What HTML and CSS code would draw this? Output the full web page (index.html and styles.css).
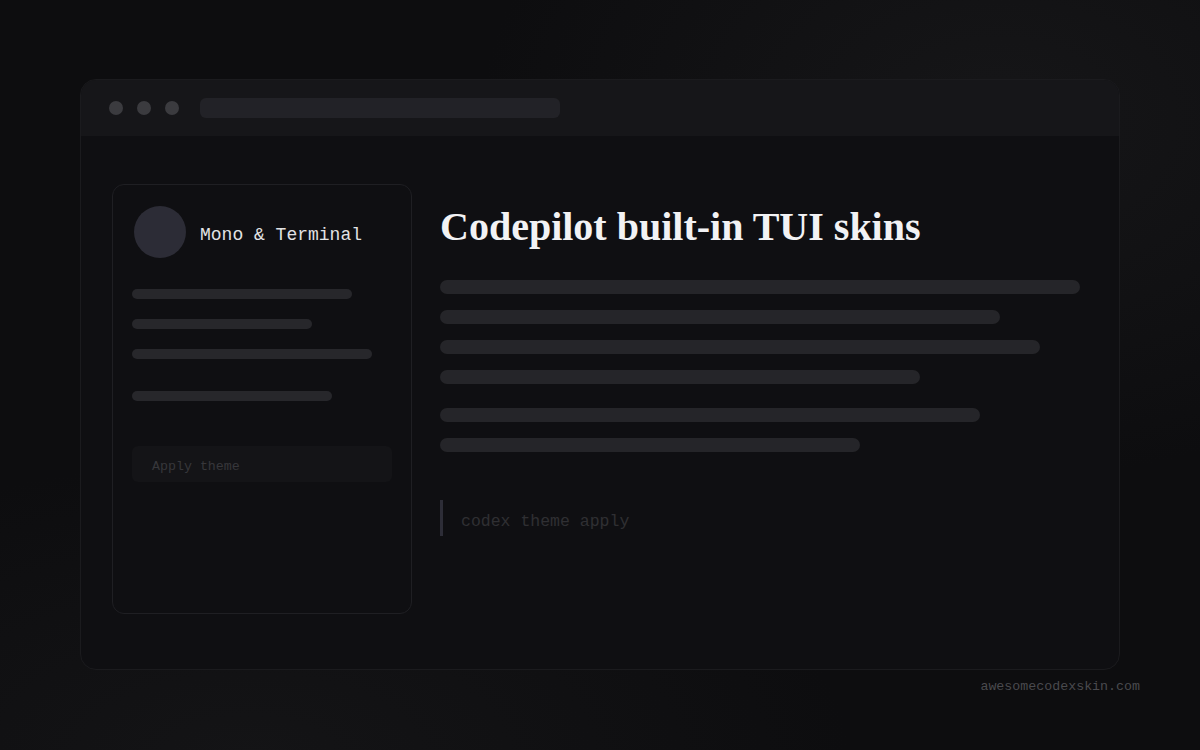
FILE: index.html
```html
<!DOCTYPE html>
<html lang="en">
<head>
<meta charset="utf-8">
<title>Codepilot built-in TUI skins</title>
<link rel="stylesheet" href="styles.css">
</head>
<body>
<div class="stage">
  <div class="window">
    <div class="titlebar">
      <span class="dot"></span><span class="dot"></span><span class="dot"></span>
      <span class="url"></span>
    </div>
    <div class="content">
      <aside class="card">
        <div class="card-head">
          <div class="avatar"></div>
          <div class="name">Mono &amp; Terminal</div>
        </div>
        <div class="card-lines">
          <div class="bar sm w220"></div>
          <div class="bar sm w180"></div>
          <div class="bar sm w240"></div>
          <div class="bar sm w200 gap-top"></div>
        </div>
        <div class="apply">Apply theme</div>
      </aside>
      <main class="main">
        <h1 class="title">Codepilot built-in TUI skins</h1>
        <div class="lines">
          <div class="bar lg w640"></div>
          <div class="bar lg w560"></div>
          <div class="bar lg w600"></div>
          <div class="bar lg w480"></div>
        </div>
        <div class="lines second">
          <div class="bar lg w540"></div>
          <div class="bar lg w420"></div>
        </div>
        <div class="cmd">codex theme apply</div>
      </main>
    </div>
  </div>
  <div class="footer">awesomecodexskin.com</div>
</div>
</body>
</html>
```
FILE: styles.css
```css
* { box-sizing: border-box; }
html, body { margin: 0; padding: 0; }
body {
  width: 1200px;
  height: 750px;
  overflow: hidden;
  background:
    radial-gradient(ellipse 520px 360px at 1000px 120px, #161618 0%, rgba(22,22,24,0) 100%),
    radial-gradient(ellipse 600px 300px at 250px 760px, #141416 0%, rgba(20,20,22,0) 100%),
    #0d0d0f;
  font-family: "Liberation Mono", "DejaVu Sans Mono", monospace;
}
.stage {
  padding: 79px 80px 0 80px;
}
.window {
  height: 591px;
  border-radius: 16px;
  background: #0f0f12;
  border: 1px solid #1b1b1e;
  overflow: hidden;
}
.titlebar {
  height: 56px;
  background: #161619;
  display: flex;
  align-items: center;
  padding-left: 28px;
  gap: 14px;
}
.dot {
  width: 14px;
  height: 14px;
  border-radius: 50%;
  background: #3b3b3f;
}
.url {
  width: 360px;
  height: 20px;
  border-radius: 6px;
  background: #222227;
  margin-left: 7px;
}
.content {
  display: flex;
  padding: 48px 39px 0 31px;
  gap: 28px;
}
.card {
  width: 300px;
  height: 430px;
  border: 1px solid #1f1f23;
  border-radius: 12px;
  padding: 21px 19px;
  flex-shrink: 0;
}
.card-head {
  display: flex;
  align-items: center;
  gap: 14px;
  padding-left: 2px;
}
.avatar {
  width: 52px;
  height: 52px;
  border-radius: 50%;
  background: #2c2c36;
}
.name {
  color: #e2e2e4;
  font-size: 18px;
  line-height: 24px;
  margin-top: 6px;
}
.card-lines {
  display: flex;
  flex-direction: column;
  gap: 20px;
  margin-top: 31px;
}
.bar {
  background: #27272b;
  border-radius: 6px;
}
.bar.sm { height: 10px; border-radius: 5px; }
.bar.lg { height: 14px; border-radius: 7px; background: #252529; }
.gap-top { margin-top: 12px; }
.w180 { width: 180px; }
.w200 { width: 200px; }
.w220 { width: 220px; }
.w240 { width: 240px; }
.w420 { width: 420px; }
.w480 { width: 480px; }
.w540 { width: 540px; }
.w560 { width: 560px; }
.w600 { width: 600px; }
.w640 { width: 640px; }
.apply {
  margin-top: 45px;
  height: 36px;
  width: 260px;
  border-radius: 6px;
  background: #141417;
  color: #37373b;
  font-size: 13.3px;
  line-height: 36px;
  padding-left: 20px;
  padding-top: 3px;
}
.main {
  flex: 1;
  padding-top: 18px;
}
.title {
  margin: 0;
  font-family: "Liberation Serif", "Times New Roman", serif;
  font-weight: bold;
  font-size: 40px;
  line-height: 50px;
  color: #f2f2f4;
}
.lines {
  display: flex;
  flex-direction: column;
  gap: 16px;
  margin-top: 28px;
}
.lines.second { margin-top: 24px; }
.cmd {
  margin-top: 48px;
  border-left: 3px solid #2d2d37;
  height: 36px;
  padding-left: 18px;
  color: #2f2f33;
  font-size: 16.5px;
  line-height: 44px;
}
.footer {
  text-align: right;
  color: #4a4a4e;
  font-size: 13.3px;
  line-height: 20px;
  margin-top: 7px;
  padding-right: 60px;
  margin-right: -80px;
}
```
